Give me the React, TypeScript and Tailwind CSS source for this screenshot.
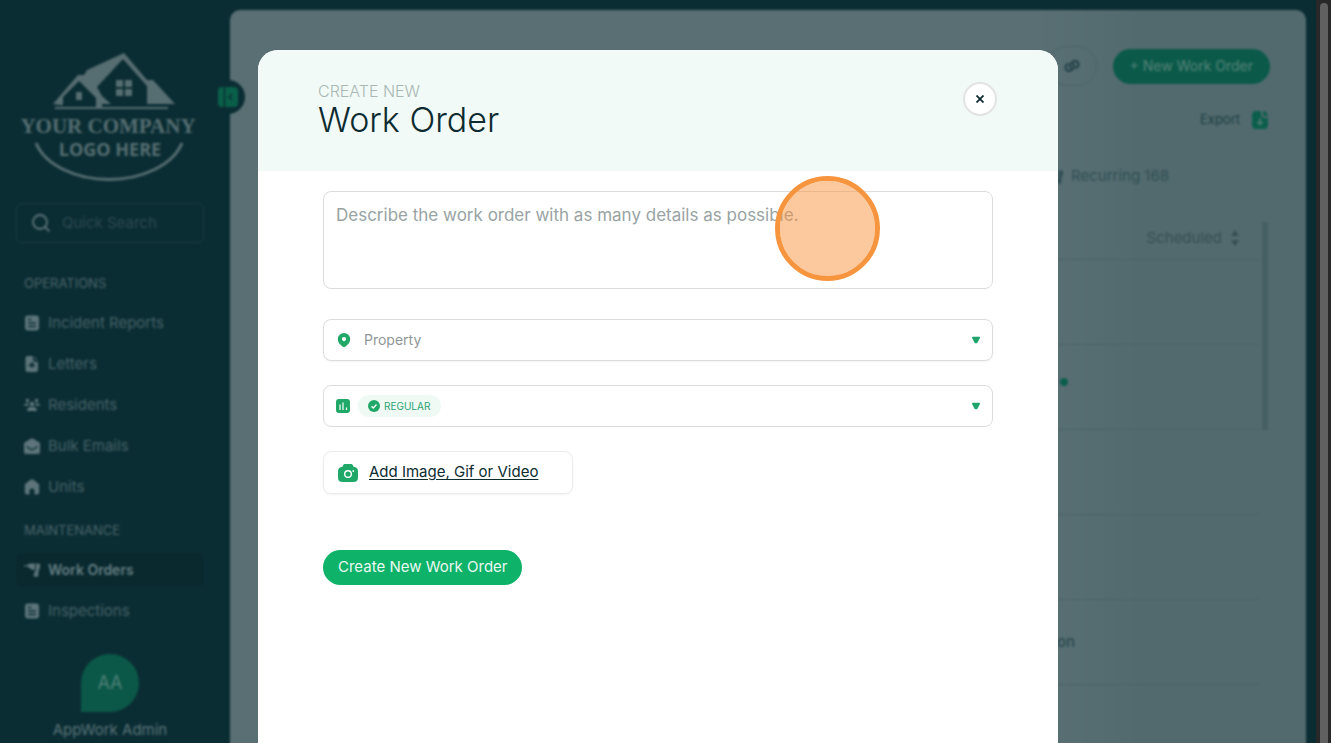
import type { ReactNode } from "react"

type NavItem = { label: string; icon: ReactNode; active?: boolean }

function ReportIcon() {
  return (
    <svg viewBox="0 0 16 16" className="h-4 w-4 shrink-0" fill="none">
      <rect x="1" y="0.5" width="14" height="15" rx="3" fill="currentColor" />
      <path d="M4.5 4.5h2.5M4.5 8h7M4.5 11.5h7" stroke="#0a2d33" strokeWidth="1.3" strokeLinecap="round" />
    </svg>
  )
}

function LetterIcon() {
  return (
    <svg viewBox="0 0 16 16" className="h-4 w-4 shrink-0" fill="none">
      <path d="M3.5 0H9v3.5C9 5 10 6 11.5 6H14v7.5a2.5 2.5 0 0 1-2.500 2.500h-8a2 2 0 0 1-2-2V2a2 2 0 0 1 2-2Z" fill="currentColor" />
      <path d="m10.500.5 3.200 3.500h-2.200a1 1 0 0 1-1-1Z" fill="currentColor" opacity="0.7" />
      <path d="M8 7v5M5.800 9.500 8 7l2.200 2.500Z" stroke="#0a2d33" strokeWidth="1.4" fill="#0a2d33" />
    </svg>
  )
}

function ResidentsIcon() {
  return (
    <svg viewBox="0 0 16 16" className="h-4 w-4 shrink-0" fill="currentColor">
      <circle cx="3.5" cy="3.5" r="1.8" />
      <circle cx="12.5" cy="3.5" r="1.8" />
      <circle cx="8" cy="7" r="2.3" />
      <path d="M0 8.500C0 7 1.500 6.200 3 6.200h1.500c-.5 1 0 2 .3 2.600H0ZM16 8.500c0-1.500-1.500-2.300-3-2.300h-1.500c.5 1 0 2-.3 2.600H16ZM3 14c0-2.500 1.500-4 3.500-4h3c2 0 3.500 1.500 3.500 4Z" />
    </svg>
  )
}

function EmailIcon() {
  return (
    <svg viewBox="0 0 16 16" className="h-4 w-4 shrink-0" fill="none">
      <path d="M8 0 15 4.200c.7.400 1 .8 1 1.600V14a2 2 0 0 1-2 2H2a2 2 0 0 1-2-2V5.800c0-.8.300-1.200 1-1.600Z" fill="currentColor" />
      <path d="m2.500 8.500 4.200 2.700c.8.500 1.800.5 2.600 0l4.200-2.700" stroke="#0a2d33" strokeWidth="1.3" />
    </svg>
  )
}

function HomeIcon() {
  return (
    <svg viewBox="0 0 16 16" className="h-4 w-4 shrink-0" fill="currentColor">
      <path d="M6.500.8a2.500 2.500 0 0 1 3 0l4.700 3.700c.6.500 1 1.200 1 2V13a2.500 2.500 0 0 1-2.500 2.500H10.500V12a2.500 2.500 0 0 0-5 0v3.500H3.300A2.500 2.500 0 0 1 .8 13V6.500c0-.8.400-1.500 1-2Z" />
    </svg>
  )
}

function DrillIcon() {
  return (
    <svg viewBox="0 0 16 16" className="h-4 w-4 shrink-0" fill="currentColor">
      <path d="M0 3.200h3.500V2.600L6 1.500h5v6.300H8.500L6 6.500 4 5V4.400H0ZM12 1.500h2.500l1.500.8v4l-1.300 1.500-.5 4.700.3 1.500-1 .8h-3l-1-1.300 1.500-4.500 1-1Z" />
    </svg>
  )
}

function Logo() {
  return (
    <svg viewBox="0 0 178 130" className="h-[130px] w-[178px]" fill="currentColor">
      <path d="M34 51 59 22h6l3-5 37-17 23 27h6l22 24h-28V33L104 6 78 34l5 9 9 8h-9v4h-6V45L60 28 44 44v8h-4Z" />
      <path d="M36 54h113v2H36Z" />
      <path d="M57 39h6v8h-6ZM97 27h7v7h-7ZM106 27h7v7h-7ZM97 36h7v7h-7ZM106 36h7v7h-7Z" />
      <path d="M17 90c9 22 40 36.500 73 36.500s64-14.500 73-36.500" fill="none" stroke="currentColor" strokeWidth="3" />
      <text x="89" y="80" textAnchor="middle" fontSize="21" fontWeight="700" fontFamily="Liberation Serif, serif">
        YOUR COMPANY
      </text>
      <text x="91" y="103" textAnchor="middle" fontSize="18" fontWeight="700" fontFamily="Open Sans, sans-serif">
        LOGO HERE
      </text>
    </svg>
  )
}

const operations: NavItem[] = [
  { label: "Incident Reports", icon: <ReportIcon /> },
  { label: "Letters", icon: <LetterIcon /> },
  { label: "Residents", icon: <ResidentsIcon /> },
  { label: "Bulk Emails", icon: <EmailIcon /> },
  { label: "Units", icon: <HomeIcon /> },
]

const maintenance: NavItem[] = [
  { label: "Work Orders", icon: <DrillIcon />, active: true },
  { label: "Inspections", icon: <ReportIcon /> },
]

function NavGroup({ title, items }: { title: string; items: NavItem[] }) {
  return (
    <section>
      <h2 className="px-2 text-[13px] leading-5 text-[#4b646a]">{title}</h2>
      <ul className="mt-[13px] flex flex-col gap-[7px]">
        {items.map((item) => (
          <li key={item.label}>
            <a
              href="#"
              className={
                item.active
                  ? "flex h-[34px] items-center gap-2 rounded-md bg-[#09292f] px-2 text-sm font-semibold text-[#667e82]"
                  : "flex h-[34px] items-center gap-2 px-2 text-[15px] text-[#466167]"
              }
            >
              <span className="text-[#5d757a]">{item.icon}</span>
              {item.label}
            </a>
          </li>
        ))}
      </ul>
    </section>
  )
}

function Sidebar() {
  return (
    <aside className="relative flex w-[230px] shrink-0 flex-col pt-[53px] pr-[26px] pl-4">
      <div className="flex justify-center pr-1 text-[#566d71]">
        <Logo />
      </div>
      <label className="mt-5 flex h-10 items-center gap-3 rounded-md border border-[#193b41] px-[15px] text-[#5d757a]">
        <svg viewBox="0 0 18 18" className="h-[18px] w-[18px] shrink-0" fill="none" stroke="currentColor" strokeWidth="1.8">
          <circle cx="8" cy="8" r="7" />
          <path d="m13 13 4.500 4.500" />
        </svg>
        <input
          type="search"
          aria-label="Quick Search"
          placeholder="Quick Search"
          className="w-full bg-transparent text-[15px] outline-none placeholder:text-[#2c494f]"
        />
      </label>
      <nav className="mt-[30px] flex flex-col gap-4">
        <NavGroup title="OPERATIONS" items={operations} />
        <NavGroup title="MAINTENANCE" items={maintenance} />
      </nav>
      <div className="mt-[26px] flex flex-col items-center gap-2">
        <div className="flex h-[58px] w-[58px] items-center justify-center rounded-full rounded-bl-none bg-[#0b5848] text-lg text-[#4f8077]">
          AA
        </div>
        <span className="text-[15px] leading-5 text-[#5b7378]">AppWork Admin</span>
      </div>
      <button
        type="button"
        aria-label="Collapse sidebar"
        className="absolute top-[80px] -right-[15px] z-10 flex h-[34px] w-[34px] items-center justify-center rounded-full bg-[#0a2d33]"
      >
        <svg viewBox="0 0 20 20" className="h-5 w-5" fill="none">
          <rect width="20" height="20" rx="4" fill="#0a5f49" />
          <path d="M6.500 0v20M14 7l-3 3 3 3" stroke="#0a2d33" strokeWidth="1.5" />
        </svg>
      </button>
    </aside>
  )
}

function WorkOrders() {
  return (
    <main className="mt-[10px] mr-[10px] min-w-0 flex-1 overflow-hidden rounded-t-[10px] bg-linear-to-r from-[#596f74] from-75% to-[#526a6e] to-85% pt-9 pr-9 pl-9 text-[#2c4b50]">
      <div className="flex h-10 items-center justify-end gap-4">
        <button
          type="button"
          aria-label="Copy link"
          className="flex h-10 w-[50px] items-center justify-center rounded-full border border-[#4a6267] text-[#213f45]"
        >
          <svg viewBox="0 0 16 16" className="h-4 w-4" fill="none" stroke="currentColor" strokeWidth="2" strokeLinecap="round">
            <path d="M6.800 9.800C5.300 8.300 5.600 6.700 6.800 5.600l1.500-1.400c1.300-1.200 3.600-1.700 5.200-.2 1.600 1.600 1.100 3.900-.3 5.200l-.8.8" />
            <path d="M9.200 6.200c1.500 1.500 1.200 3.100 0 4.200l-1.500 1.400c-1.300 1.200-3.600 1.700-5.200.2-1.600-1.600-1.100-3.900.3-5.200l.8-.8" />
          </svg>
        </button>
        <button type="button" className="h-[35px] rounded-full bg-[#0b5a49] px-[17px] text-sm whitespace-nowrap text-[#568379]">
          + New Work Order
        </button>
      </div>
      <div className="flex h-[68px] items-center justify-end">
        <button type="button" className="flex items-center gap-3 pr-0.5 text-[13px] text-[#1d3d43]">
          Export
          <svg viewBox="0 0 16 18" className="h-[18px] w-4" fill="none">
            <path d="M4 0h5v3.500C9 5.500 10.500 7 12.500 7H16v7a4 4 0 0 1-4 4H4a4 4 0 0 1-4-4V4a4 4 0 0 1 4-4Z" fill="#0b5e4b" />
            <path d="M11 0c2.500 0 4.500 2.500 5 5h-3a2 2 0 0 1-2-2Z" fill="#0b5e4b" />
            <path d="M8 7v6M5.500 11 8 13.500l2.500-2.500" stroke="#547d76" strokeWidth="1.5" />
          </svg>
        </button>
      </div>
      <div className="flex h-[45px] items-center justify-end gap-2 pr-[101px] text-[15px] text-[#304f54]">
        <DrillIcon />
        Recurring 168
      </div>
      <div className="mt-[18px] flex gap-0.5 pr-0.5">
        <table className="flex-1 table-fixed border-collapse text-sm">
          <thead>
            <tr className="h-[42px] border-b border-[#4a6468]">
              <th aria-label="Details" />
              <th className="w-[185px] pr-5">
                <span className="flex items-center justify-end gap-2 text-[15px] font-normal text-[#354f54]">
                  Scheduled
                  <svg viewBox="0 0 10 18" className="h-[18px] w-2.5" fill="currentColor">
                    <path d="M5 1 9 7H1ZM5 17l4-6H1Z" />
                  </svg>
                </span>
              </th>
            </tr>
          </thead>
          <tbody>
            <tr className="h-[85px] border-b border-[#4a6468]">
              <td />
              <td />
            </tr>
            <tr className="h-[85px] border-b border-[#4a6468]">
              <td className="pb-2.5">
                <span className="mr-[7px] ml-auto block h-2 w-2 rounded-full bg-[#0b5e4b]" />
              </td>
              <td />
            </tr>
            <tr className="h-[85px] border-b border-[#4a6468]">
              <td />
              <td />
            </tr>
            <tr className="h-[85px] border-b border-[#4a6468]">
              <td />
              <td />
            </tr>
            <tr className="h-[85px] border-b border-[#4a6468]">
              <td className="text-right text-[15px] font-medium">on</td>
              <td />
            </tr>
          </tbody>
        </table>
        <div className="mt-[5px] h-[208px] w-1.5 bg-[#465f63]" />
      </div>
    </main>
  )
}

function Caret() {
  return (
    <svg viewBox="0 0 8 8" className="pointer-events-none h-2 w-2 shrink-0" fill="#1fa56b">
      <path d="M.8.700h6.400c.8 0 1 .6.7 1.300L5.600 6.400c-.7 1.200-2.500 1.200-3.200 0L.1 2C-.2 1.300 0 .7.800.7Z" />
    </svg>
  )
}

function NewWorkOrderDialog() {
  return (
    <div className="absolute inset-0 z-20 flex justify-center pt-[50px] backdrop-blur-[1px]">
      <div role="dialog" aria-label="Work Order" className="w-[800px] max-w-full overflow-hidden rounded-t-[20px] bg-white">
        <header className="flex h-[121px] items-start justify-between bg-[#f1faf6] pt-8 pr-[61px] pl-[60px]">
          <div>
            <p className="text-base leading-[18px] font-light text-[#a9b7b4]">CREATE NEW</p>
            <h1 className="text-[34px] leading-10 font-light text-[#0d2b30]">Work Order</h1>
          </div>
          <button
            type="button"
            aria-label="Close"
            className="flex h-[34px] w-[34px] items-center justify-center rounded-full border-2 border-[#e3e3e3] bg-white"
          >
            <svg viewBox="0 0 8 8" className="h-2 w-2" stroke="#0d2b30" strokeWidth="1.8">
              <path d="m.5.5 7 7M7.500.5l-7 7" />
            </svg>
          </button>
        </header>

        <form className="flex flex-col px-[65px] pt-5">
          <div className="relative">
            <textarea
              aria-label="Description"
              placeholder="Describe the work order with as many details as possible."
              className="block h-[98px] w-full resize-none rounded-lg border border-[#dcdcdc] px-3 py-[11px] text-[17px] leading-6 outline-none placeholder:text-[#98a3a3]"
            />
            {/* Click marker */}
            <span className="pointer-events-none absolute -top-[15px] left-[452px] h-[105px] w-[105px] rounded-full border-5 border-[#f7943e] bg-[#f99440]/50 bg-clip-padding" />
          </div>

          <label className="mt-[30px] flex h-[42px] items-center gap-3 rounded-lg border border-[#dcdcdc] px-3 shadow-xs">
            <svg viewBox="0 0 16 16" className="h-4 w-4 shrink-0" fill="#1fa868">
              <path fillRule="evenodd" d="M8 1a6.200 6.200 0 0 0-6.200 6.200c0 3.300 2.400 5.400 4.700 7.300.900.700 2.100.7 3 0 2.300-1.900 4.700-4 4.700-7.300A6.200 6.200 0 0 0 8 1Zm0 4a2.100 2.100 0 1 1 0 4.200A2.100 2.100 0 0 1 8 5Z" />
            </svg>
            <select aria-label="Property" className="flex-1 appearance-none bg-transparent text-sm text-[#8f9698] outline-none">
              <option>Property</option>
            </select>
            <Caret />
          </label>

          <label className="mt-6 flex h-[42px] items-center gap-2 rounded-lg border border-[#dcdcdc] px-3">
            <svg viewBox="0 0 14 14" className="h-3.5 w-3.5 shrink-0" fill="none">
              <rect width="14" height="14" rx="3" fill="#1fa868" />
              <path d="M4 5.500V11M7 3.500V11M10.500 8.500V11" stroke="white" strokeWidth="1.2" />
            </svg>
            <span className="flex h-[22px] items-center gap-1 rounded-full bg-[#effaf5] px-2.5">
              <svg viewBox="0 0 12 12" className="h-3 w-3 shrink-0" fill="none">
                <circle cx="6" cy="6" r="6" fill="#1fa868" />
                <path d="m3.500 6.200 1.800 1.800L8.500 4.500" stroke="white" strokeWidth="1.3" />
              </svg>
              <select aria-label="Priority" className="appearance-none bg-transparent text-[10px] text-[#2ba371] outline-none">
                <option>REGULAR</option>
              </select>
            </span>
            <span className="ml-auto">
              <Caret />
            </span>
          </label>

          <button
            type="button"
            className="mt-6 flex h-[43px] w-[250px] items-center gap-[11px] rounded-lg border border-[#ebebeb] px-3.5 text-[15px] text-[#0d2b30] shadow-xs"
          >
            <svg viewBox="0 0 20 18" className="h-[18px] w-5 shrink-0" fill="none">
              <path d="M7 0h6c1 0 1.500.5 2 1.500l.5 1.200c2.800.2 4.500 1.600 4.500 4.300v6.500c0 3-1.500 4.500-4.500 4.500h-11C1.500 18 0 16.500 0 13.500V7c0-2.700 1.700-4.100 4.500-4.300L5 1.500C5.500.5 6 0 7 0Z" fill="#1fa868" />
              <circle cx="10" cy="10" r="3.3" stroke="white" strokeWidth="1.4" />
              <circle cx="15.3" cy="7" r="0.9" fill="white" />
            </svg>
            <span className="underline underline-offset-2">Add Image, Gif or Video</span>
          </button>

          <button type="submit" className="mt-14 h-[35px] self-start rounded-full bg-[#0eb269] px-[15px] text-[15px] text-[#e9f8f1]">
            Create New Work Order
          </button>
        </form>
      </div>
    </div>
  )
}

export default function App() {
  return (
    <div className="flex h-screen w-full overflow-hidden bg-[#0a2d33] font-[Inter,sans-serif]">
      <div className="relative flex min-w-0 flex-1 overflow-hidden">
        <Sidebar />
        <WorkOrders />
        <NewWorkOrderDialog />
      </div>
      {/* Scroll track */}
      <div className="w-[15px] shrink-0 bg-[#282828] pt-[3px] pr-[3px] pl-1">
        <div className="h-full rounded-t-full bg-[#606060]" />
      </div>
    </div>
  )
}
